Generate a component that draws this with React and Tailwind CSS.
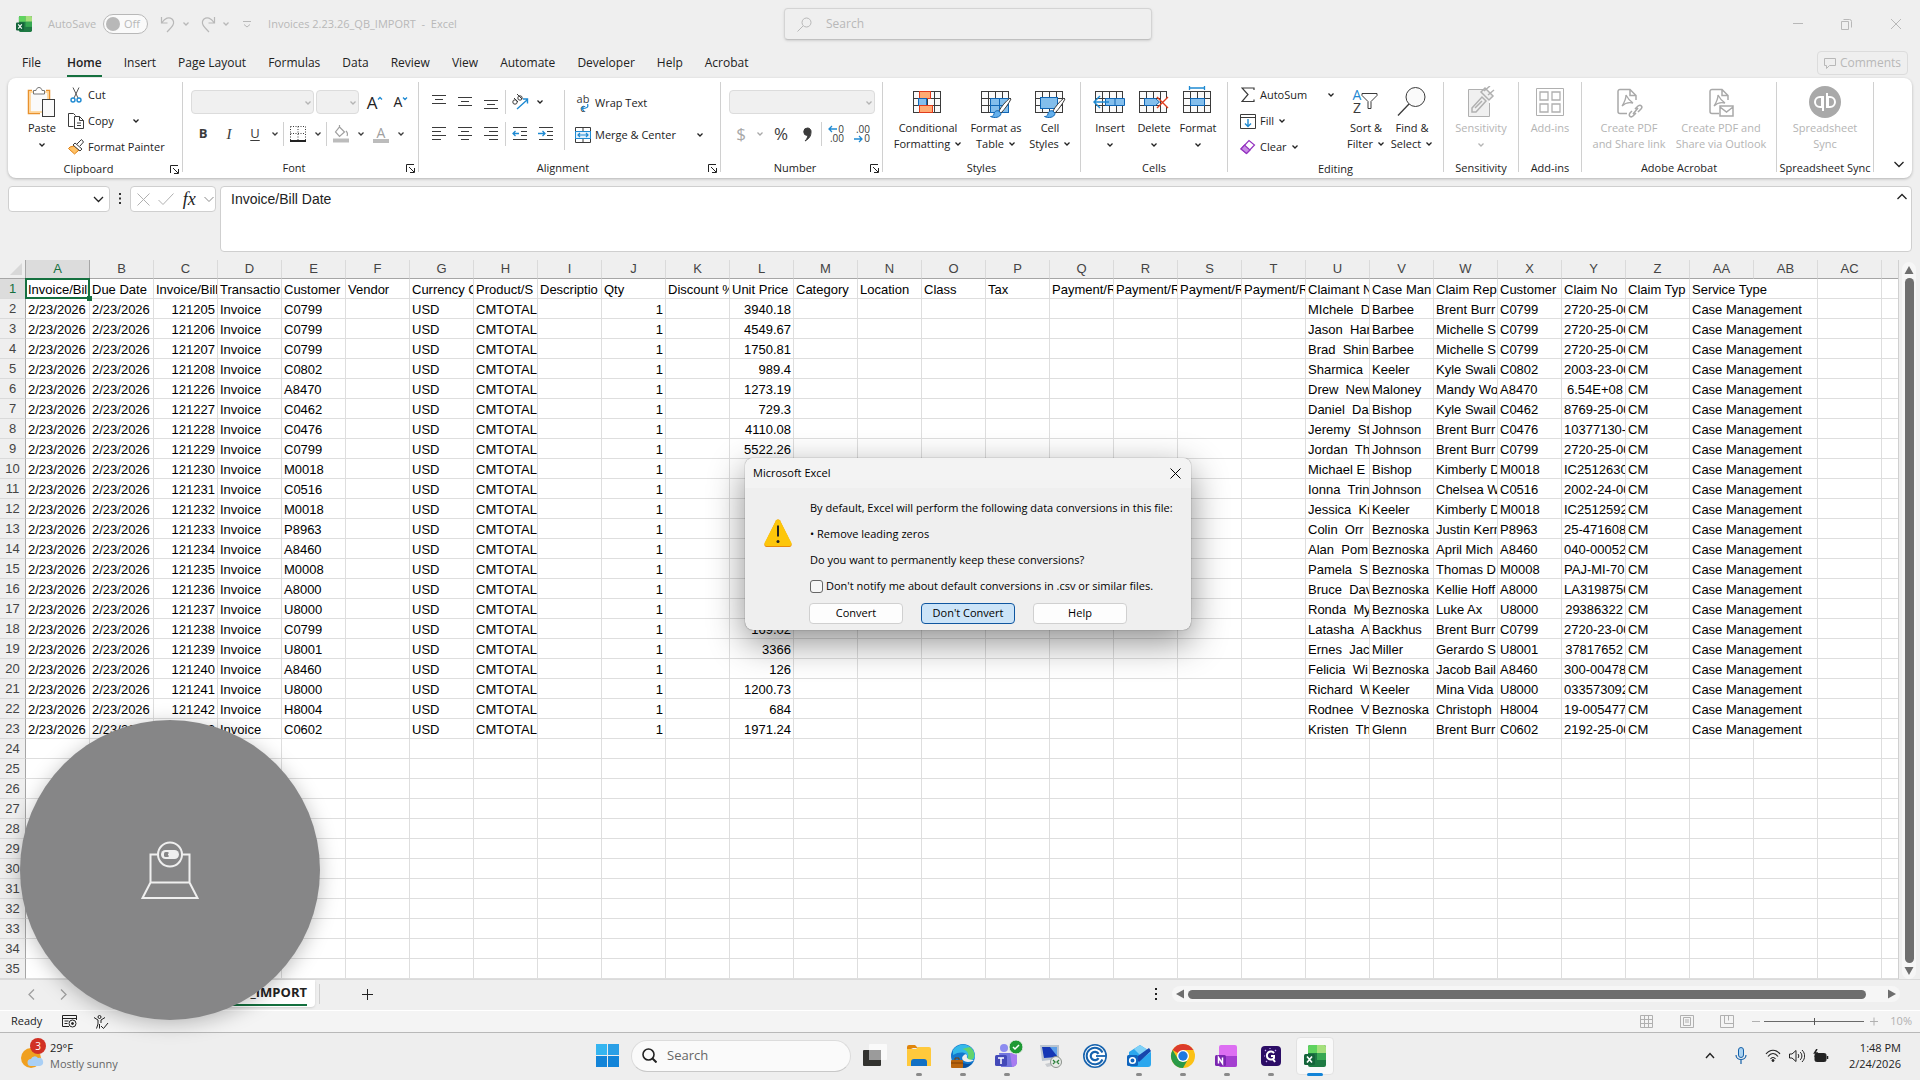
import React from "react";

const invoices = [
  ["121205", "C0799", "3940.18", "MIchele  D", "Barbee", "Brent Burr", "2720-25-00"],
  ["121206", "C0799", "4549.67", "Jason  Har", "Barbee", "Michelle S", "2720-25-00"],
  ["121207", "C0799", "1750.81", "Brad  Shin", "Barbee", "Michelle S", "2720-25-00"],
  ["121208", "C0802", "989.4", "Sharmica", "Keeler", "Kyle Swali", "2003-23-00"],
  ["121226", "A8470", "1273.19", "Drew  New", "Maloney", "Mandy Wo", "6.54E+08"],
  ["121227", "C0462", "729.3", "Daniel  Da", "Bishop", "Kyle Swail", "8769-25-00"],
  ["121228", "C0476", "4110.08", "Jeremy  St", "Johnson", "Brent Burr", "10377130-"],
  ["121229", "C0799", "5522.26", "Jordan  Th", "Johnson", "Brent Burr", "2720-25-00"],
  ["121230", "M0018", "", "Michael E", "Bishop", "Kimberly D", "IC2512630"],
  ["121231", "C0516", "", "Ionna  Trin", "Johnson", "Chelsea W", "2002-24-00"],
  ["121232", "M0018", "", "Jessica  Kr", "Keeler", "Kimberly D", "IC2512592"],
  ["121233", "P8963", "", "Colin  Orr", "Beznoska", "Justin Kern", "25-471608"],
  ["121234", "A8460", "", "Alan  Pom", "Beznoska", "April Mich", "040-00052"],
  ["121235", "M0008", "", "Pamela  S", "Beznoska", "Thomas D", "PAJ-MI-70"],
  ["121236", "A8000", "", "Bruce  Dav", "Beznoska", "Kellie Hoff", "LA3198750"],
  ["121237", "U8000", "", "Ronda  My", "Beznoska", "Luke Ax", "29386322"],
  ["121238", "C0799", "169.02", "Latasha  A", "Backhus", "Brent Burr", "2720-23-00"],
  ["121239", "U8001", "3366", "Ernes  Jac", "Miller", "Gerardo S", "37817652"],
  ["121240", "A8460", "126", "Felicia  Wi", "Beznoska", "Jacob Bail", "300-00478"],
  ["121241", "U8000", "1200.73", "Richard  W", "Keeler", "Mina Vida", "033573092"],
  ["121242", "H8004", "684", "Rodnee  V", "Beznoska", "Christoph", "19-005477"],
  ["121243", "C0602", "1971.24", "Kristen  Th", "Glenn", "Brent Burr", "2192-25-00"],
];

const columns = [
  ..."ABCDEFGHIJKLMNOPQRSTUVWXYZ".split(""),
  "AA", "AB", "AC", "AD", "AE", "AF", "AG", "AH",
];

const headings = [
  "Invoice/Bill", "Due Date", "Invoice/Bill", "Transactio", "Customer", "Vendor", "Currency C",
  "Product/S", "Descriptio", "Qty", "Discount %", "Unit Price", "Category", "Location", "Class", "Tax",
  "Payment/R", "Payment/R", "Payment/R", "Payment/R", "Claimant N", "Case Man", "Claim Rep", "Customer",
  "Claim No", "Claim Typ", "Service Type",
];

const rightAligned = [2, 9, 11];

function buildRow(index) {
  if (index === 0) return headings;
  const inv = invoices[index - 1];
  if (!inv) return null;
  const [num, cust, price, claimant, manager, rep, claim] = inv;
  return [
    "2/23/2026", "2/23/2026", num, "Invoice", cust, "", "USD", "CMTOTAL", "", "1", "", price,
    "", "", "", "", "", "", "", "", claimant, manager, rep, cust, claim, "CM", "Case Management",
  ];
}

const numericClaims = ["6.54E+08", "29386322", "37817652"];

/* ---------- small shared pieces ---------- */

function Icon({ w = 16, h = 16, children, className = "" }) {
  return (
    <svg
      width={w}
      height={h}
      viewBox={`0 0 ${w} ${h}`}
      fill="none"
      stroke="currentColor"
      className={`shrink-0 ${className}`}
      aria-hidden="true"
    >
      {children}
    </svg>
  );
}

function Chevron({ className = "" }) {
  return (
    <Icon w={8} h={6} className={className}>
      <path d="M1.5 1.5 4 4l2.5-2.5" strokeWidth="1.3" />
    </Icon>
  );
}

function Divider({ className = "h-6" }) {
  return <span className={`w-px shrink-0 bg-[#d0d0d0] ${className}`} />;
}

function IconButton({ label, className = "w-6", disabled, children }) {
  return (
    <button
      type="button"
      aria-label={label}
      disabled={disabled}
      className={`flex h-6 shrink-0 items-center justify-center ${className}`}
    >
      {children}
    </button>
  );
}

function Group({ label, launcher, className = "", children }) {
  return (
    <section className={`flex shrink-0 ${className}`}>
      <div className="flex min-w-0 flex-1 flex-col">
        <div className="flex flex-1 pt-2">{children}</div>
        <div className="flex h-5 items-center text-[11px] whitespace-nowrap">
          <span className="flex-1 text-center">{label}</span>
          {launcher && (
            <button type="button" aria-label={`${label} settings`} className="mr-[3px] ml-px">
              <Icon w={9} h={9}>
                <path d="M.5 8V.5H8M3 3l5 5M8.500 4v4.500H4" strokeWidth="1" />
              </Icon>
            </button>
          )}
        </div>
      </div>
      <Divider className="mt-1 mb-1.5" />
    </section>
  );
}

function BigButton({ icon, lines, chevron, below, disabled, className = "" }) {
  return (
    <button
      type="button"
      disabled={disabled}
      className={`flex shrink-0 flex-col items-center text-[11px] leading-4 whitespace-nowrap disabled:text-[#b4b4b4] ${className}`}
    >
      <span className="flex h-[34px] items-start justify-center">{icon}</span>
      {lines.map((line, i) => (
        <span key={line} className="flex items-center gap-1">
          {line}
          {chevron && i === lines.length - 1 && <Chevron />}
        </span>
      ))}
      {below && <Chevron className="mt-1.5" />}
    </button>
  );
}

function SmallButton({ icon, children, chevron }) {
  return (
    <button type="button" className="flex h-[26px] items-center gap-1 text-[11px] whitespace-nowrap">
      <span className="flex w-4 justify-center">{icon}</span>
      {children}
      {chevron && <Chevron />}
    </button>
  );
}

function EmptySelect({ label, className }) {
  return (
    <span className={`relative flex h-6 ${className}`}>
      <select
        aria-label={label}
        disabled
        className="h-full w-full appearance-none rounded-sm border border-[#dcdcdc] bg-[#f0f0f0]"
      />
      <Chevron className="absolute top-2.5 right-0.5 text-[#b4b4b4]" />
    </span>
  );
}

/* ---------- ribbon drawings ---------- */

function TableBase({ children }) {
  return (
    <Icon w={34} h={32} className="text-[#3b3b3b]">
      <rect x="2.500" y="5.500" width="27" height="21" fill="#fafafa" />
      <path d="M2.500 12.500h27M2.500 19.500h27M9.500 5.500v21M16.500 5.500v21M23.500 5.500v21" strokeWidth="1" />
      {children}
    </Icon>
  );
}

function Brush() {
  return (
    <>
      <path d="M31 12c-4 3-9 9-11 13l2 2c4-4 8-10 10-14z" fill="#fff" stroke="#3b3b3b" />
      <path d="M20 25c-3-1-5 1-5 3-.500 2-2 2.500-3.500 2.500 4 2 10 1 10.500-3z" fill="#64b0ec" stroke="#1066b5" />
    </>
  );
}

const ConditionalIcon = (
  <TableBase>
    <rect x="8.500" y="5.500" width="11" height="7" fill="#ffab73" stroke="#e03c1c" />
    <rect x="7.500" y="12.500" width="8" height="7" fill="#83beec" stroke="#1066b5" />
    <rect x="8.500" y="19.500" width="13" height="7" fill="#ffab73" stroke="#e03c1c" />
  </TableBase>
);

const FormatTableIcon = (
  <TableBase>
    <path d="M11.500 12.500h18v14h-18zM11.500 19.500h18M20.500 12.500v14" fill="#83beec" stroke="#1066b5" />
    <Brush />
  </TableBase>
);

const CellStylesIcon = (
  <TableBase>
    <rect x="7.500" y="11.500" width="17" height="11" fill="#83beec" stroke="#1066b5" />
    <Brush />
  </TableBase>
);

const InsertIcon = (
  <TableBase>
    <path d="M12.500 12.500h19v7h-19zM22 12.500v7" fill="#83beec" stroke="#1066b5" />
    <path d="M1 16h15M7 10l-6 6 6 6" stroke="#1f8ad2" strokeWidth="1.500" />
  </TableBase>
);

const DeleteIcon = (
  <TableBase>
    <rect x="24" y="12" width="8" height="9" fill="#fff" stroke="none" />
    <path d="M7.500 12.500h11l4 3.500-4 3.500h-11z" fill="#83beec" stroke="#1066b5" />
    <path d="m20 11 11 11M31 11 20 22" stroke="#e03c1c" strokeWidth="1.400" />
  </TableBase>
);

const FormatIcon = (
  <TableBase>
    <path d="M8.500 0v4M23.500 0v4M8.500 2h15" stroke="#1f8ad2" strokeWidth="1.300" />
    <rect x="9.500" y="12.500" width="14" height="7" fill="#83beec" stroke="#1066b5" />
  </TableBase>
);

const PasteIcon = (
  <Icon w={30} h={32}>
    <path d="M5 4.500H1.500v23H13M19 4.500h3.500V14" stroke="#e8912d" strokeWidth="1.500" />
    <rect x="3" y="6" width="18" height="20" fill="#fafafa" stroke="#ffd08a" strokeWidth="1.500" />
    <path d="M6.500 8V4.500H9c.5-4 5.500-4 6 0h2.500V8z" fill="#fff" stroke="#777" />
    <rect x="15.500" y="13.500" width="12" height="17" fill="#fafafa" stroke="#3b3b3b" />
  </Icon>
);

const CutIcon = (
  <Icon w={14} h={16}>
    <path d="M4 .5 9 11M10 .5 5 11" stroke="#555" />
    <circle cx="4" cy="13" r="2" stroke="#1f8ad2" strokeWidth="1.400" />
    <circle cx="10" cy="13" r="2" stroke="#1f8ad2" strokeWidth="1.400" />
  </Icon>
);

const CopyIcon = (
  <Icon w={16} h={16} className="text-[#3b3b3b]">
    <path d="M5.500 13.500h-5V.5h5l2 2" />
    <path d="M6.500 3.500h5l4 4v8h-9zM11.500 3.500v4h4M9 10h4M9 12.500h4" />
  </Icon>
);

const PainterIcon = (
  <Icon w={16} h={16}>
    <path d="M2 8 .5 9.500l6 5.500L11 11 6 7z" fill="#ffc266" stroke="#e07f10" />
    <path d="m5 6 2-2 7 6-2 2zM9 5l4.500-4.500L15.500 3 12 7" fill="#fff" stroke="#3b3b3b" />
  </Icon>
);

function TextLines({ widths, shift = 0 }) {
  return (
    <Icon w={16} h={18} className="text-[#3b3b3b]">
      {widths.map(([x1, x2], i) => (
        <path key={i} d={`M${x1} ${2.5 + shift + i * 4}H${x2}`} />
      ))}
    </Icon>
  );
}

const leftLines = [[1, 15], [1, 10], [1, 15], [1, 10]];
const centerLines = [[1, 15], [4, 12], [1, 15], [4, 12]];
const rightLines = [[1, 15], [6, 15], [1, 15], [6, 15]];
const threeLines = [[1, 15], [4, 12], [1, 15]];

function IndentIcon({ flip }) {
  return (
    <Icon w={16} h={18} className="text-[#3b3b3b]">
      <path d="M1 2.500h14M9 6.500h6M9 10.500h6M1 14.500h14" />
      <path d={flip ? "M0 8.500h7M4.500 6 7 8.500 4.500 11" : "M1 8.500h6M3.500 6 1 8.500 3.500 11"} stroke="#1f8ad2" strokeWidth="1.300" />
    </Icon>
  );
}

/* ---------- sections ---------- */

function ExcelLogo({ className = "" }) {
  return (
    <svg viewBox="0 0 22 22" className={className} aria-hidden="true">
      <rect x="4" width="18" height="22" rx="2" fill="#1e7a43" />
      <path d="M6 0h7v8H4V2a2 2 0 0 1 2-2z" fill="#5fd35f" />
      <path d="M13 0h7a2 2 0 0 1 2 2v6h-9z" fill="#a5e07c" />
      <path d="M13 8h9v7h-9z" fill="#37a852" />
      <rect y="9" width="11" height="11" rx="1.500" fill="#14643a" />
      <path d="m3 11.500 5 6M8 11.500l-5 6" stroke="#fff" strokeWidth="1.600" />
    </svg>
  );
}

function TitleBar() {
  return (
    <header className="grid h-12 grid-cols-[1fr_auto_1fr] items-center px-4 text-[#b8b8b8]">
      <div className="flex items-center text-[11px]">
        <ExcelLogo className="size-4" />
        <label className="ml-4 flex items-center gap-[7px]">
          AutoSave
          <input type="checkbox" role="switch" className="sr-only" />
          <span className="flex h-5 w-[45px] items-center gap-1 rounded-full border border-[#b8b8b8] bg-[#fafafa] px-0.5">
            <span className="size-3.5 rounded-full bg-[#b8b8b8]" />
            Off
          </span>
        </label>
        <button type="button" aria-label="Undo" className="ml-3">
          <Icon w={16} h={17}>
            <path d="M1.500 1v6h6M2 6.500C5 2 9 .5 12 3c4 4 0 8-5 13" strokeWidth="1.200" />
          </Icon>
        </button>
        <Chevron className="ml-1.5" />
        <button type="button" aria-label="Redo" className="ml-2.5">
          <Icon w={16} h={17}>
            <path d="M14.500 1v6h-6M14 6.500C11 2 7 .5 4 3c-4 4 0 8 5 13" strokeWidth="1.200" />
          </Icon>
        </button>
        <Chevron className="ml-1.5" />
        <button type="button" aria-label="Customize toolbar" className="ml-3">
          <Icon w={10} h={10}>
            <path d="M1 2.500h8M2 5.500 5 8l3-2.500" />
          </Icon>
        </button>
        <span className="ml-4 whitespace-pre">{"Invoices 2.23.26_QB_IMPORT  -  Excel"}</span>
      </div>
      <label className="ml-4 flex h-8 w-[368px] items-center gap-3.5 rounded border border-[#d4d4d4] border-b-[#c0c0c0] px-3 shadow-sm">
        <Icon w={15} h={15}>
          <circle cx="9.500" cy="5.500" r="4.500" />
          <path d="M6 9 .5 14.500" />
        </Icon>
        <input
          type="search"
          aria-label="Search"
          placeholder="Search"
          className="min-w-0 flex-1 bg-transparent text-[12px] outline-none placeholder:text-[#b8b8b8]"
        />
      </label>
      <div className="flex items-center justify-end pr-0.5">
        <button type="button" aria-label="Minimize" className="flex w-12 justify-center">
          <Icon w={10} h={10}><path d="M0 4.500h10" /></Icon>
        </button>
        <button type="button" aria-label="Restore" className="flex w-12 justify-center">
          <Icon w={11} h={11}><path d="M.5 2.500h7v8h-7zM2.500.5h6a2 2 0 0 1 2 2v6" /></Icon>
        </button>
        <button type="button" aria-label="Close" className="flex w-8 justify-end">
          <Icon w={12} h={12}><path d="m1 1 10 10M11 1 1 11" /></Icon>
        </button>
      </div>
    </header>
  );
}

const tabs = [
  "Home", "Insert", "Page Layout", "Formulas", "Data", "Review",
  "View", "Automate", "Developer", "Help", "Acrobat",
];

function RibbonTabs() {
  return (
    <nav className="flex h-[30px] items-center px-3">
      <button type="button" className="mr-[15px] ml-2.5 h-[27px]">File</button>
      {tabs.map((tab) => (
        <button
          key={tab}
          type="button"
          className={
            tab === "Home"
              ? "relative mx-[11px] h-[27px] font-semibold after:absolute after:inset-x-0 after:bottom-0 after:h-0.5 after:bg-[#15703f]"
              : "mx-[11px] h-[27px]"
          }
        >
          {tab}
        </button>
      ))}
      <button
        type="button"
        disabled
        className="ml-auto flex h-6 items-center gap-1 rounded border border-[#dcdcdc] px-1.5 text-[#b8b8b8]"
      >
        <Icon w={12} h={12}><path d="M.5 1.500h11v7h-6l-3 3v-3h-2z" /></Icon>
        Comments
      </button>
    </nav>
  );
}

function Ribbon() {
  return (
    <div className="mx-2 flex h-[100px] rounded-lg bg-white shadow-[0_1px_3px_rgba(0,0,0,0.25)]">
      <Group label="Clipboard" launcher className="w-[175px]">
        <BigButton icon={PasteIcon} lines={["Paste"]} below className="w-[60px] pl-2" />
        <div className="-mt-1 flex flex-col">
          <SmallButton icon={CutIcon}>Cut</SmallButton>
          <SmallButton icon={CopyIcon} chevron>
            <span className="mr-3.5">Copy</span>
          </SmallButton>
          <SmallButton icon={PainterIcon}>Format Painter</SmallButton>
        </div>
      </Group>

      <Group label="Font" launcher className="w-[236px]">
        <div className="flex flex-col gap-2 pt-1 pl-2">
          <div className="flex items-center gap-0.5">
            <EmptySelect label="Font" className="w-[123px]" />
            <EmptySelect label="Font size" className="w-[43px]" />
            <IconButton label="Increase font size" className="ml-0.5 w-6">
              <span className="text-[17px] leading-none">A</span>
              <Icon w={6} h={12} className="text-[#1f8ad2]"><path d="M1 3.500 3 1.500l2 2" strokeWidth="1.300" /></Icon>
            </IconButton>
            <IconButton label="Decrease font size">
              <span className="text-[14px] leading-none">A</span>
              <Icon w={6} h={12} className="text-[#1f8ad2]"><path d="m1 1.500 2 2 2-2" strokeWidth="1.300" /></Icon>
            </IconButton>
          </div>
          <div className="flex items-center gap-0.5 text-[#3b3b3b]">
            <IconButton label="Bold"><b className="text-[13px]">B</b></IconButton>
            <IconButton label="Italic"><i className="font-['Liberation_Serif',serif] text-[15px]">I</i></IconButton>
            <IconButton label="Underline"><span className="text-[13px] underline underline-offset-2">U</span></IconButton>
            <IconButton label="Underline options" className="w-3"><Chevron /></IconButton>
            <Divider />
            <IconButton label="Borders">
              <Icon w={16} h={16}>
                <path d="M.5.5h15M.5.5v14M15.500.5v14M8 .5v14M.5 7.500h15" strokeDasharray="1 1.500" />
                <path d="M0 15h16" stroke="#222" strokeWidth="2" />
              </Icon>
            </IconButton>
            <IconButton label="Border options" className="w-3"><Chevron /></IconButton>
            <Divider />
            <IconButton label="Fill colour">
              <Icon w={16} h={18} className="text-[#a0a0a0]">
                <path d="m6.500 2 5 5-5 4.500-4-4.500zM6.500 2V0M13 6c2 2 2 3 1 5" strokeWidth="1.200" />
                <path d="M0 15.500h16" strokeWidth="4" stroke="#bcbcbc" />
              </Icon>
            </IconButton>
            <IconButton label="Fill options" className="w-3"><Chevron /></IconButton>
            <IconButton label="Font colour">
              <span className="flex flex-col items-center text-[14px] leading-[13px] text-[#a0a0a0]">
                A
                <span className="h-1 w-4 bg-[#bcbcbc]" />
              </span>
            </IconButton>
            <IconButton label="Font colour options" className="w-3"><Chevron /></IconButton>
          </div>
        </div>
      </Group>

      <Group label="Alignment" launcher className="w-[302px]">
        <div className="flex flex-col gap-2 pt-1 pl-2">
          <div className="flex items-center gap-0.5">
            <IconButton label="Top align"><TextLines widths={threeLines} /></IconButton>
            <IconButton label="Middle align"><TextLines widths={threeLines} shift={2} /></IconButton>
            <IconButton label="Bottom align"><TextLines widths={threeLines} shift={5} /></IconButton>
            <Divider />
            <IconButton label="Orientation">
              <Icon w={18} h={17} className="text-[#3b3b3b]">
                <circle cx="4" cy="8" r="2.200" /><path d="m3 4 4 4" />
                <circle cx="9" cy="4" r="2.200" /><path d="m6 0 5 5" />
                <path d="m6 15 10-9M12 5h4.500v4.500" stroke="#1f8ad2" strokeWidth="1.400" />
              </Icon>
            </IconButton>
            <IconButton label="Orientation options" className="w-3"><Chevron /></IconButton>
          </div>
          <div className="flex items-center gap-0.5">
            <IconButton label="Align left"><TextLines widths={leftLines} /></IconButton>
            <IconButton label="Align centre"><TextLines widths={centerLines} /></IconButton>
            <IconButton label="Align right"><TextLines widths={rightLines} /></IconButton>
            <Divider />
            <IconButton label="Decrease indent"><IndentIcon /></IconButton>
            <IconButton label="Increase indent"><IndentIcon flip /></IconButton>
          </div>
        </div>
        <Divider className="mt-1 mb-2 ml-1.5" />
        <div className="flex flex-col gap-1.5 pt-1 pl-2.5">
          <SmallButton
            icon={
              <span className="relative text-[11px] leading-[9px] text-[#3b3b3b]">
                ab<br />c
                <Icon w={9} h={8} className="absolute right-0 bottom-0 text-[#1f8ad2]">
                  <path d="M7.500 0c1 3 0 4.500-6 4.500M4 2 1.500 4.500 4 7" strokeWidth="1.300" />
                </Icon>
              </span>
            }
          >
            Wrap Text
          </SmallButton>
          <SmallButton
            chevron
            icon={
              <Icon w={16} h={16} className="text-[#3b3b3b]">
                <path d="M.5.5h15v15H.5zM8 .5v4M8 12v3.500" />
                <rect x=".5" y="4.500" width="15" height="7" fill="#e3f1fc" stroke="#1f8ad2" />
                <path d="M3 8h10M5 6 3 8l2 2M11 6l2 2-2 2" stroke="#1f8ad2" strokeWidth="1.200" />
              </Icon>
            }
          >
            <span className="mr-4">Merge &amp; Center</span>
          </SmallButton>
        </div>
      </Group>

      <Group label="Number" launcher className="w-[162px]">
        <div className="flex flex-col gap-2 pt-1 pl-2">
          <EmptySelect label="Number format" className="w-[146px]" />
          <div className="flex items-center text-[#3b3b3b]">
            <IconButton label="Currency" disabled><span className="text-[17px] text-[#a8a8a8]">$</span></IconButton>
            <IconButton label="Currency options" className="w-3.5" disabled><Chevron className="text-[#a8a8a8]" /></IconButton>
            <IconButton label="Percent" className="w-7"><span className="text-[17px]">%</span></IconButton>
            <IconButton label="Comma style">
              <Icon w={9} h={15}>
                <path d="M4.500 1a3.500 3.500 0 0 1 3.500 4c0 4-2 7-6 9 2-2 3-4 2.500-5.500A3.700 3.700 0 0 1 4.500 1z" fill="#3b3b3b" />
              </Icon>
            </IconButton>
            <Divider className="mx-0.5 h-6" />
            <IconButton label="Increase decimal" className="w-6">
              <span className="relative w-4 text-right text-[10px] leading-[9px]">
                0<br />.00
                <Icon w={9} h={8} className="absolute top-0 left-0 text-[#1f8ad2]"><path d="M1 4h8M4 1 1 4l3 3" strokeWidth="1.300" /></Icon>
              </span>
            </IconButton>
            <IconButton label="Decrease decimal" className="w-7">
              <span className="relative w-4 text-right text-[10px] leading-[9px]">
                .00<br />0
                <Icon w={9} h={8} className="absolute bottom-0 left-0 text-[#1f8ad2]"><path d="M0 4h8M5 1l3 3-3 3" strokeWidth="1.300" /></Icon>
              </span>
            </IconButton>
          </div>
        </div>
      </Group>

      <Group label="Styles" className="w-[198px]">
        <div className="flex pl-[7px]">
          <BigButton icon={ConditionalIcon} lines={["Conditional", "Formatting"]} chevron className="w-[76px]" />
          <BigButton icon={FormatTableIcon} lines={["Format as", "Table"]} chevron className="w-[60px]" />
          <BigButton icon={CellStylesIcon} lines={["Cell", "Styles"]} chevron className="w-12" />
        </div>
      </Group>

      <Group label="Cells" className="w-[147px]">
        <div className="flex pl-[7px]">
          <BigButton icon={InsertIcon} lines={["Insert"]} below className="w-11" />
          <BigButton icon={DeleteIcon} lines={["Delete"]} below className="w-11" />
          <BigButton icon={FormatIcon} lines={["Format"]} below className="w-11" />
        </div>
      </Group>

      <Group label="Editing" className="w-[216px]">
        <div className="-mt-1 flex w-[114px] flex-col pl-3">
          <SmallButton
            chevron
            icon={<Icon w={14} h={16} className="text-[#3b3b3b]"><path d="M13 3V1H1l6 6.500L1 14.500h12v-2" strokeWidth="1.200" /></Icon>}
          >
            <span className="mr-4">AutoSum</span>
          </SmallButton>
          <SmallButton
            chevron
            icon={
              <Icon w={16} h={15} className="text-[#3b3b3b]">
                <path d="M.5.5h15v14H.5zM.5 3.500h15" />
                <path d="M8 5v7M5 9.500 8 12.500l3-3" stroke="#1f8ad2" strokeWidth="1.400" />
              </Icon>
            }
          >
            Fill
          </SmallButton>
          <SmallButton
            chevron
            icon={
              <Icon w={16} h={16}>
                <path d="M1 10 9 1.500 14.500 6 6.500 14.500z" fill="#fff" stroke="#9332bf" strokeWidth="1.200" />
                <path d="m1 10 3.500-4L10 11l-3.500 3.500z" fill="#c98be6" stroke="#9332bf" strokeWidth="1.200" />
              </Icon>
            }
          >
            Clear
          </SmallButton>
        </div>
        <BigButton
          className="w-12"
          chevron
          lines={["Sort &", "Filter"]}
          icon={
            <span className="flex items-center pt-0.5">
              <span className="flex flex-col text-[14px] leading-[13px] text-[#3b3b3b]">
                <span className="text-[#1f8ad2]">A</span>
                <span>Z</span>
              </span>
              <Icon w={18} h={18} className="text-[#3b3b3b]"><path d="M1 1.500h15v2l-6 6v7H7v-7l-6-6z" /></Icon>
            </span>
          }
        />
        <BigButton
          className="w-11"
          chevron
          lines={["Find &", "Select"]}
          icon={
            <Icon w={30} h={32} className="text-[#3b3b3b]">
              <circle cx="18.500" cy="11" r="9.500" fill="#fafafa" />
              <path d="M12 18 1 29.500" strokeWidth="1.300" />
            </Icon>
          }
        />
      </Group>

      <Group label="Sensitivity" className="w-[75px]">
        <BigButton
          disabled
          below
          className="w-full"
          lines={["Sensitivity"]}
          icon={
            <Icon w={28} h={32} className="text-[#b0b0b0]">
              <path d="M17 3.500H1.500v27h21V17" fill="#f0f0f0" />
              <path d="m5 22 10-11 4 4L9 26H5zM8 22l7-7" strokeWidth="1.500" />
              <path d="m14 6 4-4 8 8-4 4zM17 5l6-5M21 9l6-5" strokeWidth="1.500" fill="#f0f0f0" />
            </Icon>
          }
        />
      </Group>

      <Group label="Add-ins" className="w-[63px]">
        <BigButton
          disabled
          className="w-full"
          lines={["Add-ins"]}
          icon={
            <Icon w={30} h={32} className="text-[#b0b0b0]">
              <path d="M1.500 2.500h27v27h-27z" />
              <path d="M5 6h8v8H5zM17 6h8v8h-8zM5 18h8v8H5zM17 18h8v8h-8z" strokeWidth="1.300" />
            </Icon>
          }
        />
      </Group>

      <Group label="Adobe Acrobat" className="w-[195px]">
        <BigButton disabled className="w-[94px]" lines={["Create PDF", "and Share link"]} icon={<PdfIcon />} />
        <BigButton disabled className="w-[90px]" lines={["Create PDF and", "Share via Outlook"]} icon={<PdfIcon mail />} />
      </Group>

      <Group label="Spreadsheet Sync" className="w-[97px]">
        <BigButton
          disabled
          className="w-full"
          lines={["Spreadsheet", "Sync"]}
          icon={
            <Icon w={32} h={32}>
              <circle cx="16" cy="16" r="16" fill="#a9a9a9" stroke="none" />
              <path d="M13 11h-2a5 5 0 0 0 0 10h2zM14 10v15M19 21h2a5 5 0 0 0 0-10h-2zM18 22V7" stroke="#fff" strokeWidth="2" />
            </Icon>
          }
        />
      </Group>

      <button type="button" aria-label="Collapse ribbon" className="mt-auto mr-2 mb-2.5 ml-auto">
        <Icon w={10} h={7}><path d="m.5 1 4.500 4.500L9.500 1" strokeWidth="1.300" /></Icon>
      </button>
    </div>
  );
}

function PdfIcon({ mail }) {
  return (
    <Icon w={28} h={32} className="text-[#a9a9a9]">
      <path d="M12 27.500H5a2 2 0 0 1-2-2v-20a2 2 0 0 1 2-2h10l6 6V14M15 3.500v6h6" strokeWidth="1.500" />
      <path d="M11 9c2 4 4 6 7 8-4-1-8 0-11 3 2-3 4-7 4-11z" strokeWidth="1.300" />
      {mail ? (
        <path d="M13 20h13v10H13zM13 21l6.500 5 6.500-5" strokeWidth="1.500" fill="#fff" />
      ) : (
        <path d="m17 25-2 2c-2 3 1 5 3 3l3-3M20 23l3-3c3-2 5 1 3 3l-3 3M18 28l5-6" strokeWidth="1.500" />
      )}
    </Icon>
  );
}

function FormulaBar() {
  return (
    <div className="mx-2 mt-2 flex items-start">
      <div className="flex h-[26px] w-[102px] items-center rounded border border-[#cfcfcf] bg-white pr-[5px]">
        <input aria-label="Name box" className="min-w-0 flex-1 bg-transparent px-1 outline-none" />
        <Icon w={11} h={7}><path d="m1 1 4.500 4.500L10 1" strokeWidth="1.300" /></Icon>
      </div>
      <Icon w={20} h={26} className="text-[#333]">
        <path d="M9 8h2M9 12.500h2M9 17h2" strokeWidth="2" />
      </Icon>
      <div className="flex h-[26px] w-[86px] items-center justify-between rounded border border-[#cfcfcf] bg-white pr-px pl-1.5 text-[#b0b0b0]">
        <button type="button" aria-label="Cancel" disabled>
          <Icon w={13} h={13}><path d="m.5.5 12 12M12.500.5l-12 12" /></Icon>
        </button>
        <button type="button" aria-label="Enter" disabled>
          <Icon w={16} h={12}><path d="m.5 7 4.500 4.500L15.500.5" /></Icon>
        </button>
        <button type="button" aria-label="Insert function" className="font-['Liberation_Serif',serif] text-[18px] leading-5 text-[#222] italic">
          fx
        </button>
        <Icon w={10} h={7} className="text-[#8a8a8a]"><path d="m.5 1 4.500 4.500L9.500 1" /></Icon>
      </div>
      <div className="ml-1 flex h-[66px] flex-1 rounded border border-[#cfcfcf] bg-white">
        <textarea
          aria-label="Formula bar"
          defaultValue="Invoice/Bill Date"
          className="flex-1 resize-none px-2.5 py-0.5 font-['Liberation_Sans',sans-serif] text-[14px] leading-5 text-[#222] outline-none"
        />
        <button type="button" aria-label="Collapse formula bar" className="mt-1.5 mr-1 self-start">
          <Icon w={10} h={7}><path d="m.5 6 4.500-4.500L9.500 6" strokeWidth="1.300" /></Icon>
        </button>
      </div>
    </div>
  );
}

function Cell({ text, right, selected, span }) {
  return (
    <td colSpan={span} className="relative h-5 border-r border-b border-[#dedede] p-0">
      <div className={`h-[19px] overflow-hidden px-0.5 leading-[21px] whitespace-pre ${right ? "text-right" : ""}`}>{text}</div>
      {selected && (
        <span className="absolute -inset-px z-10 border-2 border-[#15703f]">
          <span className="absolute -right-1 -bottom-1 size-[5px] bg-[#15703f]" />
        </span>
      )}
    </td>
  );
}

function SheetGrid() {
  const rows = Array.from({ length: 35 }, (_, i) => i);

  return (
    <div className="mt-2 flex flex-1 font-['Liberation_Sans',sans-serif]">
      <div className="min-w-0 flex-1 overflow-hidden border-r border-[#d0d0d0] bg-white">
        <table className="w-[2202px] table-fixed border-separate border-spacing-0 text-[13px] leading-5 text-black">
          <thead>
            <tr>
              <th className="h-[19px] w-[26px] border-r border-b border-[#a6a6a6] bg-[#efefef] p-0">
                <Icon w={25} h={18} className="text-[#d8d8d8]">
                  <path d="M22 3v12H10z" fill="currentColor" stroke="none" />
                </Icon>
              </th>
              {columns.map((col) => (
                <th
                  key={col}
                  scope="col"
                  className={
                    col === "A"
                      ? "h-[19px] w-16 border-r border-b border-[#a6a6a6] bg-[#dcdcdc] p-0 leading-[18px] font-normal text-[#15703f]"
                      : "h-[19px] w-16 border-r border-b border-r-[#dadada] border-b-[#a6a6a6] bg-[#efefef] p-0 leading-[18px] font-normal text-[#444]"
                  }
                >
                  {col}
                </th>
              ))}
            </tr>
          </thead>
          <tbody>
            {rows.map((r) => {
              const data = buildRow(r);
              return (
                <tr key={r}>
                  <th
                    scope="row"
                    className={
                      r === 0
                        ? "h-5 border-r border-b border-r-[#a6a6a6] border-b-[#dadada] bg-[#dcdcdc] p-0 leading-[19px] font-normal text-[#15703f]"
                        : "h-5 border-r border-b border-r-[#a6a6a6] border-b-[#dadada] bg-[#efefef] p-0 leading-[19px] font-normal text-[#444]"
                    }
                  >
                    {r + 1}
                  </th>
                  {columns.map((col, c) => {
                    if (data && col === "AB") return null;
                    const text = data ? data[c] || "" : "";
                    const right = r > 0 && (rightAligned.includes(c) || numericClaims.includes(text));
                    return (
                      <Cell
                        key={col}
                        text={text}
                        right={right}
                        selected={r === 0 && c === 0}
                        span={data && col === "AA" ? 2 : undefined}
                      />
                    );
                  })}
                </tr>
              );
            })}
          </tbody>
        </table>
      </div>
      <div className="mr-1 ml-[3px] mt-0.5 flex w-3.5 flex-col items-center rounded-full bg-[#f6f6f6] py-1 text-[#6e6e6e]">
        <Icon w={10} h={8}><path d="M5 0 9.500 8h-9z" fill="currentColor" stroke="none" /></Icon>
        <span className="my-1 w-[9px] flex-1 rounded-full bg-[#6e6e6e]" />
        <Icon w={10} h={8}><path d="M5 8 9.500 0h-9z" fill="currentColor" stroke="none" /></Icon>
      </div>
    </div>
  );
}

function SheetTabs() {
  return (
    <div className="flex h-[31px] items-center border-t border-[#dadada] pr-5 pb-0.5">
      <button type="button" aria-label="Previous sheet" className="flex w-[62px] justify-center text-[#a0a0a0]">
        <Icon w={7} h={11}><path d="M6 .5 1 5.500l5 5" strokeWidth="1.300" /></Icon>
      </button>
      <button type="button" aria-label="Next sheet" className="-ml-0.5 text-[#a0a0a0]">
        <Icon w={7} h={11}><path d="m1 .5 5 5-5 5" strokeWidth="1.300" /></Icon>
      </button>
      <button type="button" className="ml-[50px] h-[27px] self-start rounded-b bg-white px-2 text-[13px] font-bold shadow-sm">
        <span className="block h-6 border-b-2 border-[#15703f] leading-5">Invoices 2.23.26_QB_IMPORT</span>
      </button>
      <Divider className="ml-1 h-5" />
      <button type="button" aria-label="New sheet" className="ml-[42px]">
        <Icon w={11} h={11}><path d="M5.500 0v11M0 5.500h11" /></Icon>
      </button>
      <div className="ml-auto flex items-center gap-3.5">
        <Icon w={4} h={12}><path d="M1 1h2M1 6h2M1 11h2" strokeWidth="2" /></Icon>
        <div className="flex h-4 w-[728px] items-center gap-1 rounded-full bg-[#f6f6f6] px-1 text-[#6e6e6e]">
          <Icon w={8} h={10}><path d="M0 5 8 .5v9z" fill="currentColor" stroke="none" /></Icon>
          <span className="mr-[18px] h-[9px] flex-1 rounded-full bg-[#6e6e6e]" />
          <Icon w={8} h={10}><path d="M8 5 0 .5v9z" fill="currentColor" stroke="none" /></Icon>
        </div>
      </div>
    </div>
  );
}

function StatusBar() {
  return (
    <div className="flex h-[22px] items-center border-t border-white bg-[#f4f4f4] pr-2 pl-[11px] text-[11px]">
      <span>Ready</span>
      <Icon w={15} h={13} className="ml-5">
        <path d="M14.500 5V.5H.5v11H7M.5 3.500h14M2.500 6h4M2.500 8.500h3" />
        <circle cx="10.500" cy="8.500" r="3.500" />
        <circle cx="10.500" cy="8.500" r="1" fill="currentColor" />
      </Icon>
      <Icon w={16} h={14} className="ml-4">
        <circle cx="6.500" cy="2" r="1.500" />
        <path d="M1 2.500 5 5v4l-1.500 4.500M12 2.500 8 5v3M6.500 9v4.500M8 11l2.500 2.500L15 8" />
      </Icon>
      <div className="ml-auto flex items-center text-[#b0b0b0]">
        <button type="button" aria-label="Normal view" className="w-10">
          <Icon w={13} h={13}><path d="M.5.5h12v12H.5zM.5 4.500h12M.5 8.500h12M4.500.5v12M8.500.5v12" /></Icon>
        </button>
        <button type="button" aria-label="Page layout view" className="w-10">
          <Icon w={14} h={13}><path d="M.5.5h13v12H.5zM3.500 2.500h7v8h-7zM5 5h4M5 7h4" /></Icon>
        </button>
        <button type="button" aria-label="Page break view" className="w-8">
          <Icon w={14} h={13}><path d="M.5.5h13v12H.5zM4.500.5v8h9M8.500.5v5" /></Icon>
        </button>
        <button type="button" aria-label="Zoom out" className="w-3">
          <Icon w={8} h={9}><path d="M0 4.500h8" /></Icon>
        </button>
        <input
          type="range"
          aria-label="Zoom"
          defaultValue="50"
          className="h-px w-[100px] appearance-none bg-[#6a6a6a] [&::-webkit-slider-thumb]:h-[7px] [&::-webkit-slider-thumb]:w-px [&::-webkit-slider-thumb]:appearance-none [&::-webkit-slider-thumb]:bg-[#555]"
        />
        <button type="button" aria-label="Zoom in" className="ml-1.5">
          <Icon w={8} h={9}><path d="M0 4.500h8M4 .5v8" /></Icon>
        </button>
        <span className="ml-3">10%</span>
      </div>
    </div>
  );
}

/* ---------- taskbar ---------- */

const appIcons = [
  {
    name: "Task view",
    art: (
      <>
        <rect x="6" y="0" width="18" height="16" rx="1" fill="#fafafa" />
        <rect x="0" y="6" width="18" height="16" rx="1" fill="#32322f" />
        <rect x="6" y="6" width="12" height="10" fill="#9b9b9b" />
      </>
    ),
  },
  {
    name: "File Explorer",
    running: true,
    art: (
      <>
        <path d="M0 3a2 2 0 0 1 2-2h6l3 3h-5l-4 2H0z" fill="#e0850c" />
        <path d="M0 5h9l2-2h11a2 2 0 0 1 2 2v17H0z" fill="#ffc93c" />
        <path d="M4 22v-4a3 3 0 0 1 3-3h10a3 3 0 0 1 3 3v4z" fill="#1270c4" />
      </>
    ),
  },
  {
    name: "Edge",
    running: true,
    art: (
      <>
        <circle cx="12" cy="12" r="12" fill="#1378ce" />
        <path d="M2 6a12 12 0 0 1 22 6c0 5-7 6-8 3 3-6-6-9-14-4z" fill="#35b9e8" />
        <path d="M19 3c5 4 6 11 1 13-2 0-4 0-4-1 3-4 1-9-5-10z" fill="#62d36c" />
        <path d="M10 14c0 6 6 7 11 5-2 3-6 5-9 5z" fill="#0c4f9c" />
        <path d="M13 11c-4 3-1 7 4 7 4 0 6-2 6-2-4 0-8-1-7-4 0-2-2-2-3-1z" fill="#eee" />
        <rect x="0" y="16" width="12" height="8" rx="1" fill="#b9650f" />
        <path d="M0 19h12M4 16v-2h4v2" stroke="#7c3f05" fill="none" />
      </>
    ),
  },
  {
    name: "Teams",
    running: true,
    art: (
      <>
        <circle cx="9" cy="4" r="4" fill="#8d8cf0" />
        <path d="M4 9h18v9a5 5 0 0 1-5 5H6z" fill="#7477de" />
        <path d="M15 9h7v9a5 5 0 0 1-5 5z" fill="#a87bf0" />
        <rect x="0" y="11" width="12" height="11" rx="1.500" fill="#4349b8" />
        <path d="M3 14h6M6 14v6" stroke="#fff" strokeWidth="1.500" />
        <circle cx="21" cy="3" r="7" fill="#1f9a35" stroke="#eee" />
        <path d="m18 3 2 2 4-4" stroke="#fff" strokeWidth="1.500" fill="none" />
      </>
    ),
  },
  {
    name: "Remote Desktop",
    art: (
      <>
        <path d="M1 1h19v14L3 17z" fill="#b9c4d0" />
        <path d="M3 3h15v10L5 14z" fill="#1537b5" />
        <path d="m11 3 7 0v9z" fill="#5d9ee8" />
        <path d="m6 20 12-3v4l-10 2z" fill="#c9ccd0" />
        <circle cx="17" cy="18" r="5.500" fill="#e8ebe8" stroke="#8b918b" />
        <path d="m14 16 2 2-2 2M20 16l-2 2 2 2" stroke="#2a8038" fill="none" strokeWidth="1.300" />
      </>
    ),
  },
  {
    name: "CCH",
    art: (
      <>
        <circle cx="12" cy="12" r="11.200" fill="#fff" stroke="#1763ae" strokeWidth="1.600" />
        <path d="M19.500 8.500a8.300 8.300 0 1 0 0 7" stroke="#1763ae" strokeWidth="2" fill="none" />
        <path d="M15.500 9.800a4.200 4.200 0 1 0 0 4.400" stroke="#1763ae" strokeWidth="2.200" fill="none" />
        <path d="M13 12h10" stroke="#1763ae" strokeWidth="1.800" />
      </>
    ),
  },
  {
    name: "Outlook",
    running: true,
    art: (
      <>
        <path d="M2 8 13 1l11 7v12a3 3 0 0 1-3 3H5a3 3 0 0 1-3-3z" fill="#2ba7ee" />
        <path d="m7 5 6-4 11 7-8 6z" fill="#7fd1f7" />
        <path d="m8 14 14-10 2 3-12 11z" fill="#1746ad" />
        <rect x="0" y="11" width="11" height="11" rx="1.500" fill="#0f64bd" />
        <circle cx="5.500" cy="16.500" r="2.800" fill="none" stroke="#fff" strokeWidth="1.600" />
      </>
    ),
  },
  {
    name: "Chrome",
    running: true,
    art: (
      <>
        <circle cx="12" cy="12" r="12" fill="#fbc116" />
        <path d="M12 12 1.600 6A12 12 0 0 1 22.400 6H12z" fill="#dc3b2c" />
        <path d="M12 24A12 12 0 0 1 1.600 6L7 15l5 3 4-1z" fill="#2a9a48" />
        <circle cx="12" cy="12" r="6" fill="#fff" />
        <circle cx="12" cy="12" r="4.700" fill="#1e78e0" />
      </>
    ),
  },
  {
    name: "OneNote",
    running: true,
    art: (
      <>
        <rect x="4" y="1" width="18" height="22" rx="2" fill="#dd6ff2" />
        <path d="M4 12h18v9a2 2 0 0 1-2 2H6a2 2 0 0 1-2-2z" fill="#a43fd0" />
        <rect x="0" y="11" width="11" height="11" rx="1.500" fill="#7a26b0" />
        <path d="M3.500 19.500v-6l4 6v-6" stroke="#fff" strokeWidth="1.500" fill="none" />
      </>
    ),
  },
  {
    name: "Recorder",
    running: true,
    art: (
      <>
        <rect x="2" y="2" width="20" height="20" rx="4" fill="#2c0d66" />
        <path d="M15 9a4 4 0 1 0 0 5v-2h-3M14 15l2 3" stroke="#fff" strokeWidth="2" fill="none" />
        <path d="M6 6l1 1M11 4v1M17 6l-1 1M5 12h1M7 18l1-1" stroke="#c9a8f5" strokeWidth="1.200" />
      </>
    ),
  },
];

function Taskbar() {
  return (
    <footer className="grid h-12 grid-cols-[1fr_auto_1fr] items-center border-t border-[#b8b8b8] bg-[#eee] pb-0.5">
      <button type="button" className="flex items-center gap-1.5 pl-5 text-left text-[11px] leading-4">
        <span className="relative flex h-8 w-6 items-center">
          <svg viewBox="0 0 24 24" className="size-6" aria-hidden="true">
            <circle cx="11" cy="14" r="10" fill="#f0a020" />
            <path d="M11 22a3.500 3.500 0 0 1 0-7 4 4 0 0 1 7-1 4 4 0 0 1 2 8z" fill="#a9cff5" />
          </svg>
          <span className="absolute -top-0.5 left-2.5 flex size-4 items-center justify-center rounded-full bg-[#d13024] text-[10px] text-white">
            3
          </span>
        </span>
        <span className="flex flex-col">
          <span className="text-[#222]">29°F</span>
          <span className="text-[#666]">Mostly sunny</span>
        </span>
      </button>

      <div className="flex items-center pl-0.5">
        <button type="button" aria-label="Start" className="flex w-11 justify-center">
          <svg viewBox="0 0 23 23" className="size-[23px]" aria-hidden="true">
            <path d="M0 0h11v11H0z" fill="#35b5f0" />
            <path d="M12 0h11v11H12z" fill="#2a9fe6" />
            <path d="M0 12h11v11H0zM12 12h11v11H12z" fill="#1384d8" />
          </svg>
        </button>
        <label className="mx-0.5 flex h-8 w-[220px] items-center gap-2.5 rounded-full border border-[#dcdcdc] border-b-[#c8c8c8] bg-[#fafafa] px-2.5">
          <Icon w={15} h={15} className="text-[#222]">
            <circle cx="6.500" cy="6.500" r="5.500" strokeWidth="1.600" />
            <path d="m10.500 10.500 4 4" strokeWidth="2" />
          </Icon>
          <input
            type="search"
            aria-label="Search Windows"
            placeholder="Search"
            className="min-w-0 flex-1 bg-transparent text-[13px] outline-none placeholder:text-[#666]"
          />
        </label>
        {appIcons.map((app) => (
          <button key={app.name} type="button" aria-label={app.name} className="relative flex h-11 w-11 items-center justify-center">
            <svg viewBox="0 0 24 24" className="size-6 overflow-visible" aria-hidden="true">{app.art}</svg>
            {app.running && <span className="absolute bottom-0.5 h-[3px] w-1.5 rounded-full bg-[#8a8a8a]" />}
          </button>
        ))}
        <button type="button" aria-label="Excel" className="relative flex h-11 w-11 items-center justify-center">
          <span className="flex h-[38px] w-[38px] items-center justify-center rounded border border-[#e2e2e2] bg-[#f9f9f9]">
            <ExcelLogo className="size-[22px]" />
          </span>
          <span className="absolute bottom-0.5 h-[3px] w-4 rounded-full bg-[#1384d8]" />
        </button>
      </div>

      <div className="flex items-center justify-end pr-[19px] text-[#222]">
        <Icon w={10} h={7} className="mr-5"><path d="m1 6 4-4.500L9 6" strokeWidth="1.400" /></Icon>
        <Icon w={12} h={17} className="mr-[18px] text-[#1560a8]">
          <rect x="3.500" y=".5" width="5" height="10" rx="2.500" fill="#a9d2f2" />
          <path d="M1 8c0 6 10 6 10 0M6 13v4" strokeWidth="1.200" />
        </Icon>
        <Icon w={16} h={13} className="mr-2">
          <path d="M1 5c4-5 10-5 14 0M3 7.500c3-4 7-4 10 0M5.500 10c1.500-2 3.500-2 5 0" strokeWidth="1.200" />
          <circle cx="8" cy="11.500" r="1" fill="currentColor" />
        </Icon>
        <Icon w={16} h={14} className="mr-2">
          <path d="M.5 5v4H3l4 3.500v-11L3 5zM9 5c1 1 1 3 0 4M11 3c2.500 2 2.500 6 0 8M13 1c3.500 3.500 3.500 8.500 0 12" />
        </Icon>
        <Icon w={16} h={14}>
          <rect x="2" y="4.500" width="11" height="8" rx="1.500" fill="currentColor" />
          <path d="M14.500 7v3M4 0 1.500 4H4L2 8" strokeWidth="1.500" />
        </Icon>
        <time className="w-[72px] text-right text-[11px] leading-4">
          1:48 PM
          <br />
          2/24/2026
        </time>
      </div>
    </footer>
  );
}

function ConversionDialog() {
  const buttonClass = "h-[21px] w-[94px] rounded border border-[#d0d0d0] bg-[#fdfdfd]";

  return (
    <div
      role="dialog"
      aria-label="Microsoft Excel"
      className="absolute top-[458px] left-[745px] z-20 w-[446px] overflow-hidden rounded-lg bg-[#efefef] text-[11px] text-black shadow-[0_12px_36px_rgba(0,0,0,0.45),0_0_1px_rgba(0,0,0,0.7)]"
    >
      <div className="flex h-[30px] items-center justify-between bg-[#f3f3f3] pr-2.5 pl-2">
        <span>Microsoft Excel</span>
        <button type="button" aria-label="Close dialog">
          <Icon w={11} h={11}><path d="m.5.5 10 10M10.500.5l-10 10" /></Icon>
        </button>
      </div>
      <div className="flex pt-[7px] pb-1.5">
        <svg width="28" height="28" viewBox="0 0 28 28" className="mt-6 mr-[18px] ml-[19px] shrink-0" aria-hidden="true">
          <path d="M12 1.500c1-1.500 3-1.500 4 0L27.500 25c.5 1.500-.5 3-2 3h-23C1 28 0 26.500.5 25z" fill="#e88a0c" />
          <path d="M12 1.500c1-1.500 3-1.500 4 0L27.500 24c.5 1.500-.5 3-2 3h-23C1 27 0 25.500.5 24z" fill="#fdc60a" />
          <path d="M14 6.500v11" stroke="#222" strokeWidth="2" />
          <circle cx="14" cy="22.500" r="1.500" fill="#222" />
        </svg>
        <div className="whitespace-nowrap">
          <p className="leading-[26px]">By default, Excel will perform the following data conversions in this file:</p>
          <p className="leading-[26px]">• Remove leading zeros</p>
          <p className="leading-[26px]">Do you want to permanently keep these conversions?</p>
          <label className="flex h-[26px] items-center gap-[3px]">
            <input type="checkbox" className="size-[13px] appearance-none rounded-[3px] border border-[#666] bg-[#f6f6f6]" />
            Don't notify me about default conversions in .csv or similar files.
          </label>
          <div className="mt-1 -ml-px flex gap-[18px]">
            <button type="button" className={buttonClass}>Convert</button>
            <button type="button" className="h-[21px] w-[94px] rounded border border-[#0f56a0] bg-[#cce4f8]">Don't Convert</button>
            <button type="button" className={buttonClass}>Help</button>
          </div>
        </div>
      </div>
    </div>
  );
}

function CameraBubble() {
  return (
    <div className="absolute top-[720px] left-5 z-10 flex size-[300px] items-center justify-center rounded-full bg-[#868687] shadow-[0_4px_20px_rgba(0,0,0,0.25)]">
      <Icon w={58} h={58} className="text-[#efefef]">
        <path d="M17 13.500H9.500v28h39v-28H41M9.500 41.500 1.500 57h55l-8-15.500" strokeWidth="2" />
        <circle cx="29" cy="13.500" r="12" strokeWidth="2" />
        <rect x="20" y="9" width="18" height="9" rx="4.500" fill="currentColor" stroke="none" />
        <rect x="23" y="11" width="5" height="5" rx="1.500" fill="#868687" stroke="none" />
        <rect x="27" y="12.500" width="2" height="2" fill="currentColor" stroke="none" />
      </Icon>
    </div>
  );
}

export default function App() {
  return (
    <div className="relative flex min-h-screen w-full flex-col overflow-hidden bg-[#efefef] font-['Open_Sans',sans-serif] text-[12px] text-[#222]">
      <TitleBar />
      <RibbonTabs />
      <Ribbon />
      <FormulaBar />
      <SheetGrid />
      <SheetTabs />
      <StatusBar />
      <Taskbar />
      <CameraBubble />
      <ConversionDialog />
    </div>
  );
}
